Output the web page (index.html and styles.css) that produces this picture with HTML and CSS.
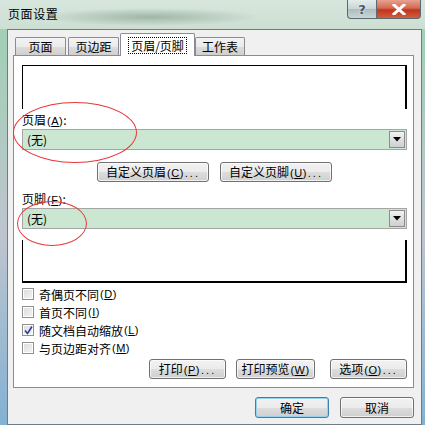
FILE: index.html
```html
<!DOCTYPE html>
<html lang="zh-CN">
<head>
    <meta charset="UTF-8">
    <title>页面设置</title>
    <link rel="stylesheet" href="styles.css">
</head>
<body>
    <div class="window">
        <div class="titlebar">
            <span class="title">页面设置</span>
            <div class="caption-buttons">
                <span class="cap-btn help">?</span>
                <span class="cap-btn close">
                    <svg width="14" height="11" viewBox="0 0 14 11"><path d="M2 1 L12 10 M12 1 L2 10" stroke="#fff" stroke-width="3" stroke-linecap="square"/></svg>
                </span>
            </div>
        </div>

        <div class="client">
            <div class="tabs">
                <div class="tab t1">页面</div>
                <div class="tab t2">页边距</div>
                <div class="tab active"><span class="focus">页眉/页脚</span></div>
                <div class="tab t4">工作表</div>
            </div>

            <div class="page">
                <div class="preview top-preview"></div>

                <label class="field-label">页眉<span class="acc">(<u>A</u>)</span>:</label>
                <div class="combo">
                    <span class="combo-text">(无)</span>
                    <span class="combo-arrow"><svg width="8" height="5" viewBox="0 0 8 5"><path d="M0 0 H8 L4 4.5 Z" fill="#000"/></svg></span>
                </div>

                <div class="custom-row">
                    <button class="btn custom">自定义页眉<span class="acc">(<u>C</u>)<span class="dots">...</span></span></button>
                    <button class="btn custom">自定义页脚<span class="acc">(<u>U</u>)<span class="dots">...</span></span></button>
                </div>

                <label class="field-label second">页脚<span class="acc">(<u>F</u>)</span>:</label>
                <div class="combo">
                    <span class="combo-text">(无)</span>
                    <span class="combo-arrow"><svg width="8" height="5" viewBox="0 0 8 5"><path d="M0 0 H8 L4 4.5 Z" fill="#000"/></svg></span>
                </div>

                <div class="preview bottom-preview"></div>

                <ul class="checks">
                    <li><span class="box"></span>奇偶页不同<span class="acc">(<u>D</u>)</span></li>
                    <li><span class="box"></span>首页不同<span class="acc">(<u>I</u>)</span></li>
                    <li><span class="box checked"><svg width="9" height="9" viewBox="0 0 9 9"><path d="M1 4.5 L3.5 7.5 L8 0.5" fill="none" stroke="#2a3f9e" stroke-width="1.6"/></svg></span>随文档自动缩放<span class="acc">(<u>L</u>)</span></li>
                    <li><span class="box"></span>与页边距对齐<span class="acc">(<u>M</u>)</span></li>
                </ul>

                <div class="page-buttons">
                    <button class="btn print">打印<span class="acc">(<u>P</u>)<span class="dots">...</span></span></button>
                    <button class="btn preview-btn">打印预览<span class="acc">(<u>W</u>)</span></button>
                    <button class="btn options">选项<span class="acc">(<u>O</u>)<span class="dots">...</span></span></button>
                </div>
            </div>

            <div class="dialog-buttons">
                <button class="btn ok">确定</button>
                <button class="btn">取消</button>
            </div>
        </div>

        <!-- hand-drawn red marks over the two combo boxes -->
        <div class="mark mark-header"></div>
        <div class="mark mark-footer"></div>
    </div>
</body>
</html>
```

FILE: styles.css
```css
* {
    box-sizing: border-box;
    margin: 0;
    padding: 0;
}

body {
    font-family: "Noto Sans CJK SC", "Liberation Sans", sans-serif;
    font-size: 12px;
    color: #000;
}

.window {
    position: relative;
    width: 425px;
    height: 425px;
    display: flex;
    flex-direction: column;
    padding: 0 3px 0 7px;
    background:
        linear-gradient(180deg, rgba(120, 200, 150, 0.55) 0%, rgba(170, 150, 200, 0.35) 55%, rgba(100, 160, 210, 0.7) 100%),
        #c9ddd2;
}

/* title bar */
.titlebar {
    height: 29px;
    display: flex;
    align-items: flex-start;
    margin: 0 -3px 0 -7px;
    padding-left: 8px;
    background:
        radial-gradient(ellipse 110px 9px at 150px 17px, rgba(120, 145, 130, 0.55), rgba(120, 145, 130, 0)),
        linear-gradient(180deg, #d7e6dc 0%, #cddfd3 100%);
}

.title {
    margin-top: 6px;
    font-size: 12px;
    letter-spacing: 0.6px;
    line-height: 16px;
}

.caption-buttons {
    margin-left: auto;
    margin-right: 4px;
    display: flex;
}

.cap-btn {
    height: 19px;
    display: flex;
    align-items: center;
    justify-content: center;
    border: 1px solid #5b6a70;
    border-top: none;
}

.help {
    width: 29px;
    border-right: none;
    border-radius: 0 0 0 4px;
    background: linear-gradient(180deg, #e4ecec 0%, #c8d4d4 50%, #aebcbd 51%, #c9d6d6 100%);
    color: #4a5560;
    font-family: "DejaVu Sans", sans-serif;
    font-weight: bold;
    font-size: 13px;
    text-shadow: 0 0 2px #fff;
}

.close {
    width: 45px;
    border-radius: 0 0 4px 0;
    background: linear-gradient(180deg, #e8a190 0%, #d36a52 45%, #c0351d 55%, #d25c3c 100%);
}

/* dialog client area */
.client {
    flex: 1;
    display: flex;
    flex-direction: column;
    background: #f0f0f0;
    border: 1px solid #6d7c86;
    padding: 3px 7px 6px 5px;
}

.tabs {
    height: 22px;
    display: flex;
    align-items: flex-end;
    padding-left: 2px;
    position: relative;
    z-index: 1;
}

.tab {
    height: 18px;
    border: 1px solid #898c95;
    border-bottom: none;
    border-radius: 2px 2px 0 0;
    background: linear-gradient(180deg, #f3f3f3 0%, #ebebeb 50%, #dddddd 51%, #cfcfcf 100%);
    text-align: center;
    line-height: 17px;
    font-size: 12px;
}

.t1 { width: 51px; margin-right: 2px; }
.t2 { width: 51px; margin-right: 1px; }
.t4 { width: 50px; }

.tab.active {
    width: 75px;
    height: 23px;
    margin-bottom: -1px;
    background: #fff;
    padding-top: 3px;
}

.focus {
    display: inline-block;
    border: 1px dotted #000;
    padding: 0 2px;
    line-height: 15px;
}

/* tab page */
.page {
    flex: 1;
    background: #fff;
    border: 1px solid #898c95;
    padding: 9px 6px 0 8px;
}

.preview {
    border-left: 1px solid #000;
    border-right: 2px solid #000;
}

.top-preview {
    height: 44px;
    border-top: 1px solid #000;
}

.bottom-preview {
    height: 43px;
    margin-top: 11px;
    border-bottom: 2px solid #000;
}

.field-label {
    display: block;
    margin-top: 3px;
    line-height: 16px;
}

.field-label.second {
    margin-top: 9px;
}

.acc {
    font-family: "Liberation Sans", sans-serif;
    font-size: 11px;
    letter-spacing: 0.5px;
    margin-left: 1px;
}

.dots {
    letter-spacing: 2px;
    margin-left: 1px;
}

.combo {
    height: 21px;
    display: flex;
    align-items: center;
    background: #cbe7d1;
    border: 1px solid #a5a5a5;
    padding-left: 4px;
}

.combo-text {
    line-height: 17px;
}

.combo-arrow {
    margin-left: auto;
    width: 16px;
    height: 17px;
    margin-right: 1px;
    display: flex;
    align-items: center;
    justify-content: center;
    border: 1px solid #8c8c8c;
    background: linear-gradient(180deg, #f2f2f2 0%, #e0e0e0 50%, #cfcfcf 100%);
}

/* buttons */
.btn {
    height: 20px;
    font-family: "Noto Sans CJK SC", "Liberation Sans", sans-serif;
    font-size: 12px;
    line-height: 16px;
    color: #000;
    border: 1px solid #707070;
    border-radius: 3px;
    background: linear-gradient(180deg, #f2f2f2 0%, #ebebeb 50%, #dddddd 51%, #cfcfcf 100%);
    box-shadow: inset 0 0 0 1px rgba(255, 255, 255, 0.7);
}

.custom-row {
    margin-top: 12px;
    display: flex;
    justify-content: center;
    gap: 11px;
}

.custom {
    width: 112px;
}

.checks {
    list-style: none;
    margin-top: 2px;
}

.checks li {
    height: 18px;
    display: flex;
    align-items: center;
}

.box {
    width: 12px;
    height: 12px;
    margin-right: 5px;
    border: 1px solid #8f8f8f;
    background: linear-gradient(135deg, #dcdcdc 0%, #f4f4f4 100%);
    box-shadow: inset 0 0 0 1px #fff;
    display: flex;
    align-items: center;
    justify-content: center;
}

.page-buttons {
    margin-top: 2px;
    display: flex;
    justify-content: flex-end;
}

.print { width: 77px; margin-right: 10px; }
.preview-btn { width: 79px; margin-right: 15px; }
.options { width: 77px; }

.dialog-buttons {
    margin-top: 9px;
    display: flex;
    justify-content: flex-end;
    gap: 11px;
}

.dialog-buttons .btn {
    width: 74px;
    height: 21px;
}

.btn.ok {
    border-color: #3c7fb1;
    box-shadow: inset 0 0 0 1px #98d1ef;
}

/* red ellipses drawn on top */
.mark {
    position: absolute;
    border: 1px solid #e8383a;
    border-radius: 50%;
}

.mark-header {
    left: 13px;
    top: 102px;
    width: 124px;
    height: 61px;
}

.mark-footer {
    left: 17px;
    top: 201px;
    width: 70px;
    height: 45px;
}
```
